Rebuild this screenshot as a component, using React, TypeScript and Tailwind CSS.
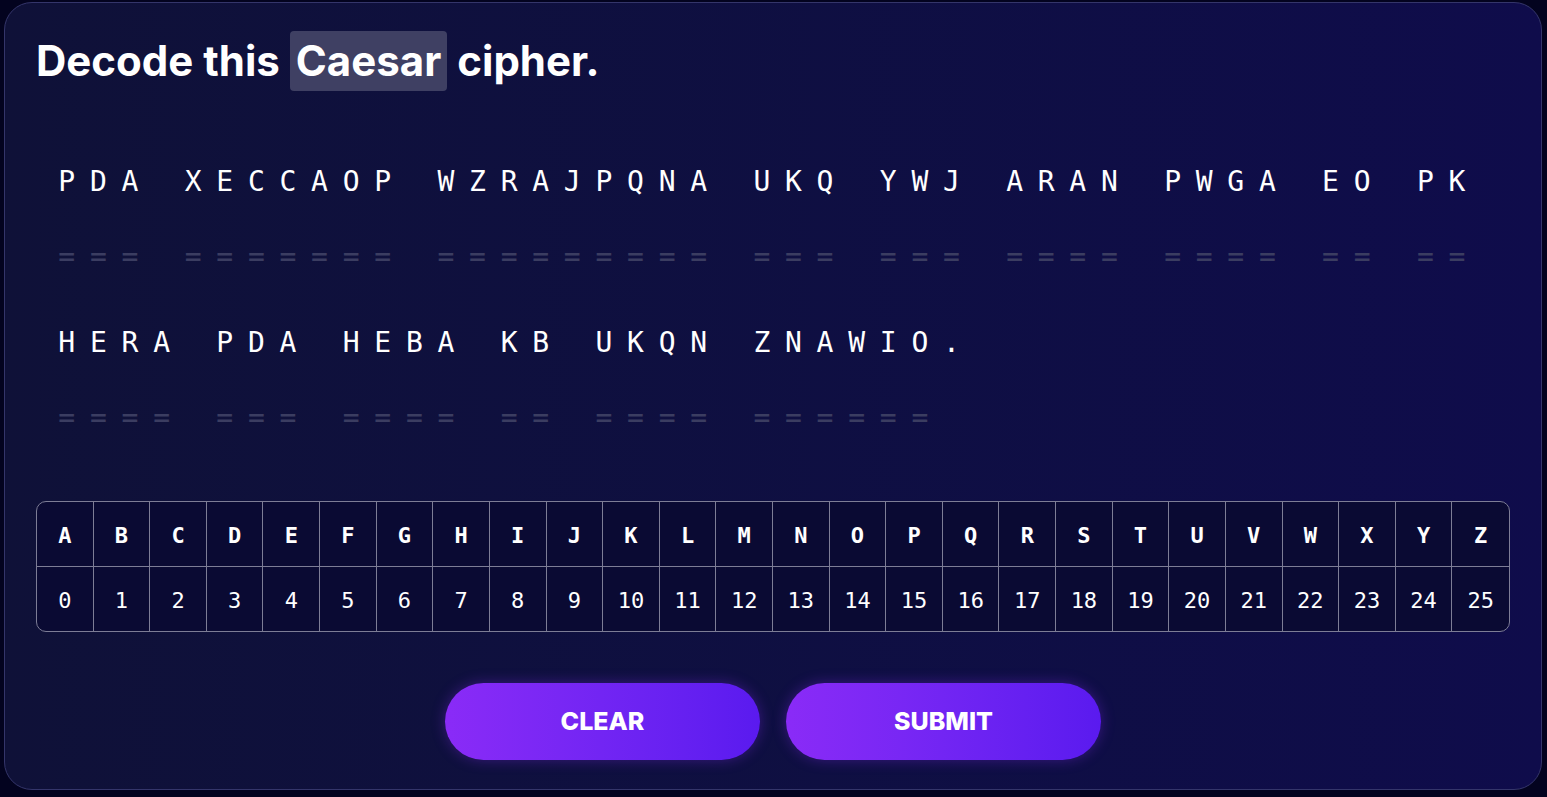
import React from 'react';

const LINES = [
  ['PDA', 'XECCAOP', 'WZRAJPQNA', 'UKQ', 'YWJ', 'ARAN', 'PWGA', 'EO', 'PK'],
  ['HERA', 'PDA', 'HEBA', 'KB', 'UKQN', 'ZNAWIO.'],
];

const ALPHABET = 'ABCDEFGHIJKLMNOPQRSTUVWXYZ'.split('');

const mono = { fontFamily: '"DejaVu Sans Mono", "Liberation Mono", monospace' };

// one letter of the puzzle with its blank underneath
const Cell = ({ ch }: { ch: string }) => {
  const isLetter = /[A-Z]/.test(ch);
  return (
    <div className="flex w-[31.6px] flex-col items-center">
      <span className="flex h-[40px] items-center text-[28px] leading-none text-white">{ch}</span>
      <span className="mt-[35px] flex h-[40px] items-center text-[28px] leading-none text-[#3b3d61]">
        {isLetter ? '=' : '\u00a0'}
      </span>
    </div>
  );
};

const Word = ({ word }: { word: string }) => (
  <div className="flex">
    {word.split('').map((ch, i) => (
      <Cell key={i} ch={ch} />
    ))}
  </div>
);

export default function App() {
  return (
    <div className="h-[797px] w-full bg-[#03031f] pl-[4px] pr-[5px] pt-[2px]">
      <div
        className="flex h-[788px] flex-col rounded-[28px] border border-[#34356a] bg-gradient-to-r from-[#0f1138] to-[#0f0c4b] px-[31px] pt-[28px]"
        style={{ fontFamily: 'Inter, "Noto Sans", sans-serif' }}
      >
        <h1 className="flex h-[60px] items-center text-[42px] font-bold leading-[60px] text-white">
          Decode this
          <span className="mx-[10px] rounded-[4px] bg-[#3f4063] px-[6px]">Caesar</span>
          cipher.
        </h1>

        <div className="mt-[71px] flex flex-col gap-[46px] pl-[15px]" style={mono}>
          {LINES.map((line, li) => (
            <div key={li} className="flex gap-[31.6px]">
              {line.map((w, wi) => (
                <Word key={wi} word={w} />
              ))}
            </div>
          ))}
        </div>

        <div
          className="mt-[63px] grid grid-cols-[repeat(26,minmax(0,1fr))] overflow-hidden rounded-[10px] border border-[#7d7d96] bg-[#0a0a33]"
          style={mono}
        >
          {ALPHABET.map((l, i) => (
            <div
              key={l}
              className={`flex h-[65px] items-center justify-center border-b border-[#7d7d96] pt-[3px] text-[22px] font-bold text-white ${i < 25 ? 'border-r' : ''}`}
            >
              {l}
            </div>
          ))}
          {ALPHABET.map((l, i) => (
            <div
              key={l + 'n'}
              className={`flex h-[64px] items-center justify-center border-[#7d7d96] pt-[2px] text-[22px] text-white ${i < 25 ? 'border-r' : ''}`}
            >
              {i}
            </div>
          ))}
        </div>

        <div className="mt-[51px] flex justify-center gap-[26px]">
          <button className="h-[77px] w-[315px] rounded-full bg-gradient-to-r from-[#8a2bf7] to-[#5a1aef] text-[25px] font-extrabold text-white shadow-[0_0_14px_rgba(138,43,247,0.35)]">
            CLEAR
          </button>
          <button className="h-[77px] w-[315px] rounded-full bg-gradient-to-r from-[#8a2bf7] to-[#5a1aef] text-[25px] font-extrabold text-white shadow-[0_0_14px_rgba(138,43,247,0.35)]">
            SUBMIT
          </button>
        </div>
      </div>
    </div>
  );
}
